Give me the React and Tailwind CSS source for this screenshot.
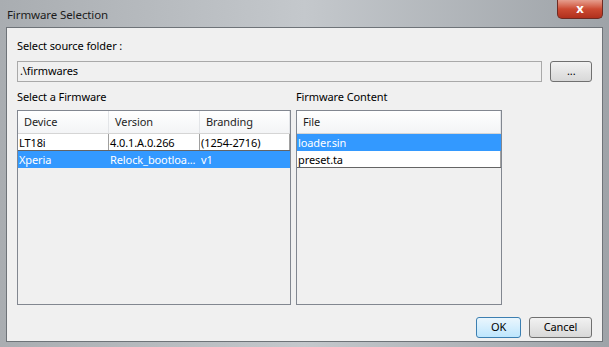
const font = { fontFamily: '"Noto Sans", "Open Sans", sans-serif' };

function Btn({ children, className = "", primary = false }) {
  return (
    <div
      className={
        "flex items-center justify-center h-[21px] rounded-[3px] border text-[11px] text-black " +
        (primary
          ? "border-[#3c7fb1] bg-gradient-to-b from-[#eaf6fd] to-[#bee6fd] "
          : "border-[#707070] bg-gradient-to-b from-[#f2f2f2] to-[#d8d8d8] ") +
        className
      }
    >
      {children}
    </div>
  );
}

function ListBox({ cols, rows, selected, className = "" }) {
  return (
    <div className={"flex flex-col border border-[#828790] bg-[#f0f0f0] " + className}>
      <div className="flex h-[23px] bg-gradient-to-b from-white to-[#f3f4f6] border-b border-[#d5d5d5]">
        {cols.map((c) => (
          <div
            key={c.name}
            className="flex items-center pl-[6px] border-r border-[#e3e5e8] text-[11px] tracking-[-0.1px] text-[#1e1e1e]"
            style={{ width: c.w }}
          >
            {c.name}
          </div>
        ))}
      </div>
      {rows.map((r, i) => (
        <div
          key={i}
          className={
            "flex h-[17px] " +
            (i === selected ? "bg-[#3399ff] text-white" : "bg-white text-black border-b border-[#646464]")
          }
        >
          {r.map((v, j) => (
            <div
              key={j}
              className={
                "pl-[1px] leading-[17px] text-[11px] tracking-[-0.1px] truncate " +
                (i === selected ? "" : "border-r border-[#a0a0a0]")
              }
              style={{ width: cols[j].w }}
            >
              {v}
            </div>
          ))}
        </div>
      ))}
    </div>
  );
}

export default function App() {
  return (
    <div
      className="w-[609px] h-[347px] flex flex-col bg-gradient-to-r from-[#a9adb1] via-[#c4c8cc] to-[#9ea3a8] tracking-[-0.1px]"
      style={font}
    >
      <div className="h-[27px] flex items-start justify-between pl-[7px] pr-[6px]">
        <span className="mt-[6px] text-[11.5px] text-[#1b1b1b]">Firmware Selection</span>
        <div className="w-[46px] h-[19px] rounded-b-[5px] border border-t-0 border-[#6d2b23] bg-gradient-to-b from-[#e59e8e] via-[#cc4a32] to-[#b0301d] flex items-center justify-center text-white font-bold text-[13px]">
          x
        </div>
      </div>
      <div className="mx-[6px] h-[315px] border border-[#6e7378] bg-[#f0f0f0] flex flex-col px-[10px] pt-[10px]">
        <div className="h-[16px] leading-[16px] text-[11px] text-black">Select source folder :</div>
        <div className="mt-[7px] flex gap-[8px]">
          <div className="w-[531px] h-[21px] border border-[#a9a9a9] bg-[#f0f0f0] flex items-center pl-[2px] text-[11px] text-black">
            .\firmwares
          </div>
          <Btn className="w-[42px] text-[10px] text-[#555]">...</Btn>
        </div>
        <div className="mt-[7px] flex h-[16px] leading-[16px] text-[11px] text-black">
          <span className="w-[279px]">Select a Firmware</span>
          <span>Firmware Content</span>
        </div>
        <div className="mt-[5px] flex gap-[5px]">
          <ListBox
            className="w-[274px] h-[195px]"
            cols={[
              { name: "Device", w: 91 },
              { name: "Version", w: 91 },
              { name: "Branding", w: 90 },
            ]}
            rows={[
              ["LT18i", "4.0.1.A.0.266", "(1254-2716)"],
              ["Xperia", "Relock_bootloa...", "v1"],
            ]}
            selected={1}
          />
          <ListBox
            className="w-[206px] h-[195px]"
            cols={[{ name: "File", w: 204 }]}
            rows={[["loader.sin"], ["preset.ta"]]}
            selected={0}
          />
        </div>
        <div className="mt-[12px] flex justify-end gap-[8px]">
          <Btn primary className="w-[45px]">OK</Btn>
          <Btn className="w-[63px]">Cancel</Btn>
        </div>
      </div>
    </div>
  );
}
